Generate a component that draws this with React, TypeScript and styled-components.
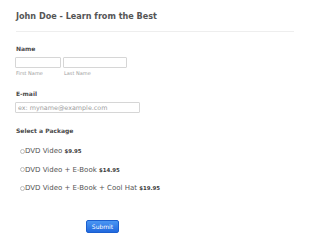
import React from 'react';
import styled, { createGlobalStyle } from 'styled-components';

const GlobalStyle = createGlobalStyle`
  html, body {
    margin: 0;
    padding: 0;
    background: #ffffff;
  }
  body {
    font-family: "DejaVu Sans", Verdana, sans-serif;
  }
`;

const Form = styled.form`
  display: flex;
  flex-direction: column;
  padding: 11px 16px 0 16px;
  width: 310px;
  box-sizing: border-box;
`;

const Title = styled.h1`
  margin: 0;
  font-size: 8.1px;
  line-height: 10px;
  font-weight: bold;
  color: #555555;
`;

const Divider = styled.hr`
  margin: 10px 0 0 0;
  border: none;
  height: 1px;
  background: #eeeeee;
`;

const Label = styled.label<{ top: number }>`
  display: block;
  margin-top: ${({ top }) => top}px;
  font-size: 6px;
  line-height: 8px;
  font-weight: bold;
  color: #4a4a4a;
`;

const NameRow = styled.div`
  display: flex;
  gap: 2px;
  margin-top: 4px;
  margin-left: -1px;
`;

const Field = styled.div`
  display: flex;
  flex-direction: column;
`;

const TextInput = styled.input<{ w: number; h: number }>`
  box-sizing: border-box;
  width: ${({ w }) => w}px;
  height: ${({ h }) => h}px;
  margin: 0;
  padding: 0 2px;
  border: 1px solid #d6d6d6;
  border-radius: 1px;
  background: #ffffff;
  font-family: inherit;
  font-size: 6.4px;
  color: #555555;
  outline: none;

  &::placeholder {
    color: #a0a0a0;
  }
`;

const SubLabel = styled.span`
  display: block;
  margin-top: 2px;
  margin-left: 1px;
  font-size: 5px;
  line-height: 6px;
  color: #a0a0a0;
`;

const EmailInput = styled(TextInput)`
  margin-top: 4px;
  margin-left: -1px;
`;

const Options = styled.div`
  display: flex;
  flex-direction: column;
  margin-top: 7px;
`;

const Option = styled.label`
  display: flex;
  align-items: center;
  height: 18.5px;
  padding-left: 3.5px;
  font-size: 7px;
  color: #555555;
  cursor: pointer;
`;

const Radio = styled.input.attrs({ type: 'radio' })`
  appearance: none;
  box-sizing: border-box;
  width: 5px;
  height: 5px;
  margin: 0 0.5px 0 0;
  border: 1px solid #bdbdbd;
  border-radius: 50%;
  background: #ffffff;
`;

const Price = styled.b`
  margin-left: 2.2px;
  font-size: 5.4px;
  color: #3a3a3a;
`;

const SubmitButton = styled.button`
  align-self: flex-start;
  margin: 22px 0 0 70px;
  width: 33px;
  height: 13px;
  padding: 0;
  border: 1px solid #1b5fcf;
  border-radius: 2px;
  background: linear-gradient(#4a96f3, #2169de);
  color: #ffffff;
  font-family: inherit;
  font-size: 6px;
  cursor: pointer;
`;

const packages = [
  { name: 'DVD Video', price: '$9.95' },
  { name: 'DVD Video + E-Book', price: '$14.95' },
  { name: 'DVD Video + E-Book + Cool Hat', price: '$19.95' },
];

export default function App() {
  return (
    <>
      <GlobalStyle />
      <Form onSubmit={(e) => e.preventDefault()}>
        <Title>John Doe - Learn from the Best</Title>
        <Divider />

        <Label top={13}>Name</Label>
        <NameRow>
          <Field>
            <TextInput w={46} h={11} />
            <SubLabel>First Name</SubLabel>
          </Field>
          <Field>
            <TextInput w={64} h={11} />
            <SubLabel>Last Name</SubLabel>
          </Field>
        </NameRow>

        <Label top={14}>E-mail</Label>
        <EmailInput w={125} h={11} placeholder="ex: myname@example.com" />

        <Label top={14}>Select a Package</Label>
        <Options>
          {packages.map((p) => (
            <Option key={p.name}>
              <Radio name="package" />
              {p.name}
              <Price>{p.price}</Price>
            </Option>
          ))}
        </Options>

        <SubmitButton type="submit">Submit</SubmitButton>
      </Form>
    </>
  );
}
